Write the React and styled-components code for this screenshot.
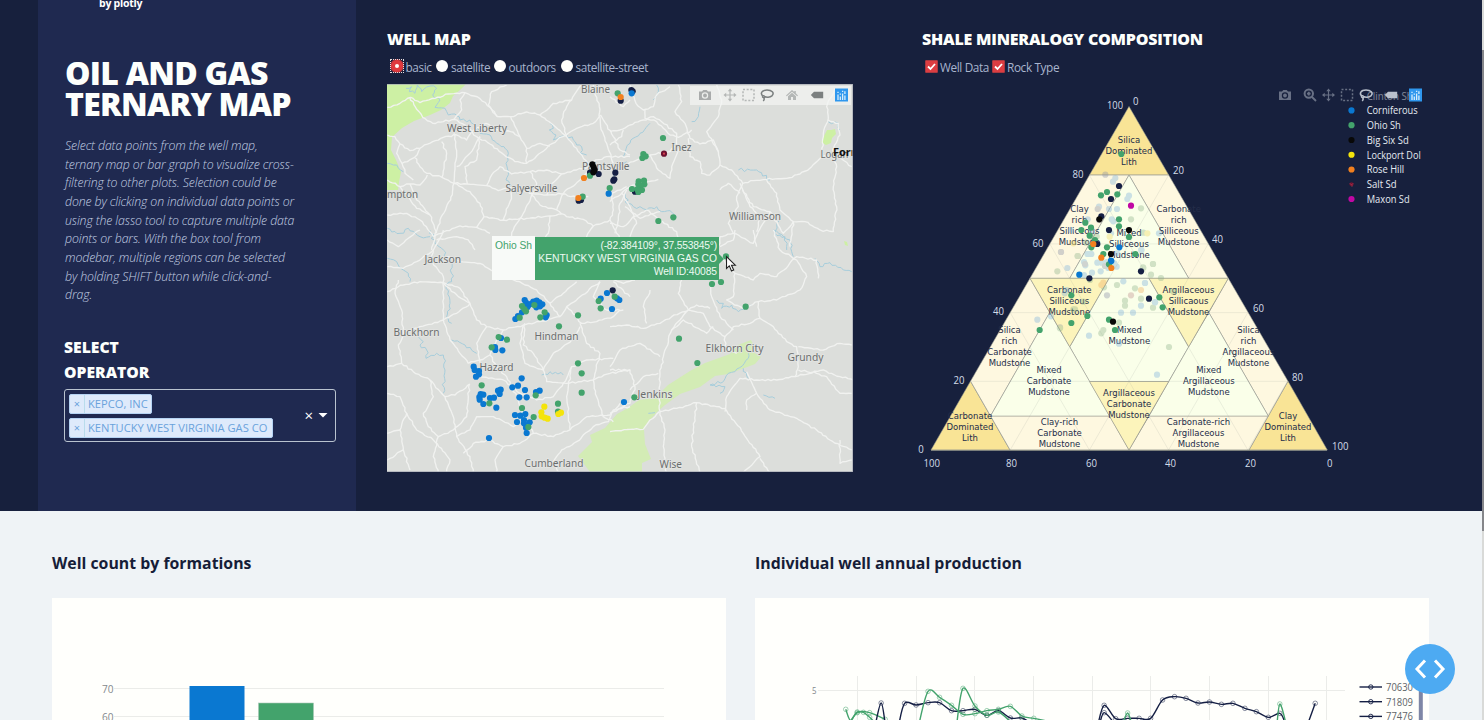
import React from "react";
import styled, { createGlobalStyle } from "styled-components";

const C = {
  bg: "#17203d", side: "#1f2950", light: "#eff3f6", card: "#fffffc",
  blue: "#0a78d1", green: "#43a36c", navy: "#151f44", black: "#080808",
  yellow: "#f4e40c", orange: "#f2801f", red: "#6d1230", magenta: "#c008a4",
};
const sans = '"Open Sans", "Noto Sans", sans-serif';

const Global = createGlobalStyle`
  * { box-sizing: border-box; }
  body { margin: 0; background: ${C.light}; font-family: ${sans}; overflow: hidden; }
  h1, h2, h3, p { margin: 0; }
`;
const Page = styled.div`position: relative; width: 1484px; height: 720px; overflow: hidden;`;
const Banner = styled.section`display: flex; height: 511px; padding-left: 38px; background: ${C.bg};`;
const Sidebar = styled.aside`width: 318px; background: ${C.side}; padding: 0 20px 0 26px; flex: none;`;
const LogoText = styled.div`
  display: flex; align-items: flex-start; height: 57px; padding-left: 35px; font: 700 10.5px/16px ${sans}; color: #fff;
  letter-spacing: -0.25px; & span { margin-top: -5px; }
`;
const Title = styled.h1`font: 800 32px/31px ${sans}; color: #fdfffc; height: 80px; padding-left: 1px; white-space: nowrap; letter-spacing: -0.72px;`;
const Intro = styled.p`font: italic 300 12.3px/18.67px ${sans}; color: #c3d0e4; height: 198px; padding-left: 1px; white-space: nowrap; letter-spacing: -0.11px;`;
const Label = styled.h3`font: 800 15.7px/25px ${sans}; color: #fdfffc; height: 54px;`;
const Select = styled.div`
  width: 272px; height: 53px; border: 1px solid #b9c3cf; border-radius: 3px;
  display: flex; align-items: center; justify-content: space-between; padding: 0 7px 0 4px;
`;
const Tags = styled.div`display: flex; flex-direction: column; align-items: flex-start; gap: 4px;`;
const Tag = styled.div`
  display: flex; height: 20px; width: ${p => p.$w}px; background: #deeafb; border: 1px solid #b5d3f3; border-radius: 2px;
  font: 400 11.15px/18px ${sans}; color: #6aa2dc; white-space: nowrap;
`;
const TagX = styled.span`width: 15px; flex: none; text-align: center; border-right: 1px solid #b9dcec; line-height: 17px; font-size: 11px;`;
const TagName = styled.span`padding-left: 3px;`;
const SelectEnd = styled.div`display: flex; align-items: center; gap: 5px; color: #fff; font: 400 15px/15px ${sans};`;

const Panel = styled.section`width: ${p => p.$w}px; margin-left: ${p => p.$ml}px; padding-top: 29px; flex: none;`;
const Heading = styled.h2`font: 800 16px/20px ${sans}; color: #fdfffc; white-space: nowrap; letter-spacing: -0.22px;`;
const Options = styled.div`display: flex; height: 35px; padding: 8px 0 0 ${p => p.$pl}px; font: 400 11.8px/20px ${sans}; color: #a9b5ce;`;
const Option = styled.label`display: flex; gap: ${p => p.$gap}px; width: ${p => p.$w}px; white-space: nowrap; letter-spacing: -0.38px;`;
const Radio = styled.span`
  position: relative; width: 12px; height: 12px; margin-top: 3px; border-radius: 50%; flex: none; background: #fffffc;
  ${p => p.$on && `
    border: 4px solid #e0393e; box-shadow: 0 0 0 1px #a8343e;
    &::after { content: ""; position: absolute; inset: -5px; border: 1px dotted #e8dede; }
  `}
`;
const Check = styled.span`width: 13px; height: 13px; margin-top: 3px; flex: none; background: #dc3d42; border: 1px solid #a93840; border-radius: 1px; display: flex;`;
const Plot = styled.div`position: relative; height: 388px;`;
const Drawing = styled.svg`display: block; overflow: ${p => p.$clip ? "hidden" : "visible"};`;
const ModeBar = styled.div`
  position: absolute; top: ${p => p.$top}px; left: ${p => p.$left}px; width: ${p => p.$w}px; height: 19px;
  background: ${p => p.$bg}; color: ${p => p.$fg};
`;
const Hover = styled.div`
  position: absolute; left: 105px; top: 152px; display: flex; align-items: flex-start;
  font: 400 10.3px/13.3px "Liberation Sans", Arial, sans-serif; white-space: nowrap;
`;
const HoverName = styled.div`width: 43px; height: 44px; padding-top: 2.500px; background: #f8faf8; color: ${C.green}; text-align: center;`;
const HoverBody = styled.div`
  width: 184px; height: 43px; margin-top: 1px; padding: 1.500px 2px 0 0; background: ${C.green}; color: #eefaf2; text-align: right; position: relative;
  &::after { content: ""; position: absolute; left: 100%; top: 17px; border: 5px solid transparent; border-left-color: ${C.green}; }
`;
const Line = styled.div`letter-spacing: ${p => p.$ls || 0}px;`;
const Pointer = styled.svg`position: absolute; left: 338px; top: 171px;`;

const Lower = styled.section`display: flex; gap: 29px; padding: 41px 0 0 52px; height: 209px;`;
const Column = styled.div`width: 674px;`;
const SubHeading = styled.h2`font: 700 15.85px/22px ${sans}; color: #161d38; height: 46px; white-space: nowrap;`;
const Card = styled.div`background: ${C.card}; height: 122px; overflow: hidden;`;
const DevButton = styled.button`
  position: absolute; left: 1405px; top: 644px; width: 50px; height: 50px; border: 0; padding: 0; border-radius: 50%;
  background: #4daaf2; display: flex; align-items: center; justify-content: center;
`;
const Scroll = styled.div`position: absolute; right: 0; top: 0; display: flex; align-items: flex-start; width: 2px; height: 720px; background: #d9dad8;`;
const Thumb = styled.div`width: 2px; height: ${p => p.$h}px; margin-top: 50px; background: #85868a;`;

/* a label whose drawn width is fixed */
const T = ({ x, y, w, children, size = 11.5, fill = "#6b6e6e", ...r }) => (
  <text x={x} y={y} textLength={w} lengthAdjust="spacingAndGlyphs" fontSize={size} fill={fill} {...r}>{children}</text>
);

const ICONS = {
  camera: <><path fillRule="evenodd" d="M1 3.5h3L5.3 2h3.4L10 3.5h3V12H1zM7 4.3a3.200 3.200 0 1 0 0 6.400a3.200 3.200 0 1 0 0 -6.400z" fill="currentColor" /><circle cx="7" cy="7.5" r="1.9" fill="currentColor" /></>,
  zoom: <><circle cx="5.8" cy="5.6" r="4.2" fill="none" stroke="currentColor" strokeWidth="2" /><path d="M9 9l4 4M4 5.6h3.6M5.8 3.8v3.6" stroke="currentColor" strokeWidth="1.8" /></>,
  pan: <><path d="M7 2v10M2 7h10" stroke="currentColor" strokeWidth="1.2" /><path d="M7 .5L9.2 3.2H4.8zM7 13.5L4.8 10.8h4.4zM.5 7l2.7-2.2v4.4zM13.5 7l-2.7 2.2V4.8z" fill="currentColor" /></>,
  box: <rect x="1.5" y="1.5" width="11" height="11" fill="none" stroke="currentColor" strokeWidth="1.5" strokeDasharray="2 1.67" />,
  lasso: <path d="M3.2 8.3C-.5 5.5 2 2 7 2s7.5 3 5.2 5.6C10 9.8 6 9.7 4.5 8.3 3 6.7 1.7 8.6 3 9.4c1.4.8 2.4-.4 1.5-1.1M3.6 9.6c1 1.2.4 2.6-.4 3.4" fill="none" stroke="currentColor" strokeWidth="1.5" />,
  home: <path d="M7 2l2.3 2V3h1.5v2.3L13 7.5l-.8.8L7 3.7 1.8 8.3 1 7.5zM7 4.8l4 3.5V12H8V9H6v3H3V8.3z" fill="currentColor" />,
  tag: <path d="M.8 7L4 3.8h9.2v6.4H4z" fill="currentColor" />,
  logo: <><rect x=".5" y=".5" width="13" height="13" fill="#2f97ee" /><path d="M3.5 12V6.5M5.8 12V8.5M8.1 12V5.5M10.4 12V7.5M3.5 5V3.7M5.8 6.8V5.5M8.1 4V2.7M10.4 6V3.2" stroke="#d9eefb" strokeWidth="1.3" /></>,
};
const IconStrip = ({ items }) => (
  <svg width="170" height="19" overflow="visible">
    {items.map(([n, x, o = 1]) => <g key={n} transform={`translate(${x - 7},2)`} opacity={o}>{ICONS[n]}</g>)}
  </svg>
);

const ROADS = [
  [380, 20, [
    "M22,262L60,250 92,232 120,248 165,235 205,222 255,218 300,236 330,262 352,290 392,290 440,276 480,285 520,250 575,240 605,195",
    "M90,232L110,268 128,292 158,310 190,305 222,298 255,315 290,350 330,372 372,404 405,425 440,430 470,408 508,375 548,350 590,325 640,310 662,285",
    "M22,345L45,350 60,372 90,392 120,385 158,365 190,352 230,345 260,360 282,330 318,310",
    "M60,372L50,400 66,430 104,412 120,385M104,412L120,440 140,460 186,472 222,490 262,492 320,497 355,512 400,500 450,520 500,525 545,522 600,535 625,530",
    "M222,340L230,400 225,440 222,490 212,540 180,600 165,650 155,690M22,480L60,500 90,492 120,495 142,465",
    "M66,430L75,460 100,480M60,500L85,530 110,565 150,585 170,640M222,490L270,515 300,550 312,590 370,600 440,595 510,588 545,582",
    "M160,650L200,632 240,618 290,622 330,640M170,660L230,650 265,660 285,690M320,497L335,465 360,440 395,462 450,455 500,450 545,462 590,450 632,440",
    "M380,690L400,630 430,580 455,525 480,555 530,570 560,590 610,598 640,618 690,600 700,570 695,520 740,500",
    "M352,290L325,255 335,215 380,195M392,290L420,350 440,385 440,430M480,285L520,315 560,350 600,400 625,430M640,195L658,260 662,320 680,370 700,430",
    "M300,350L270,400 245,430 230,440M440,385L480,370 510,378M662,285L700,350 720,390 750,405M625,430L680,410 750,410M22,585L80,580 120,600 160,650",
    "M545,462L510,500 500,525M530,570L550,520 600,480 632,440M690,600L710,640 740,690M510,588L505,640 480,690M90,492L110,540 150,585",
    "M222,298L245,270 240,240 255,218M318,310L355,330 392,335 420,350M560,350L545,300 560,260 575,240M640,618L620,650 625,690",
    "M450,455L470,490 455,525M262,492L255,440 290,420 300,350M312,590L290,622M185,365L200,400 186,472M400,500L390,545 370,600",
  ]],
  [610, 20, [
    "M0,335L30,330 60,315 100,300 130,290 155,305 200,340 200,375 180,395 120,405 70,425 0,450",
    "M60,195L78,250 100,270 130,260 140,225 180,200M105,270L105,295 140,305 180,345 205,352 245,330M205,195L215,245 195,275 225,310 240,355 270,372 310,360 325,395 330,435 365,450 398,490 430,482 470,478 530,475 570,462 605,440 635,410",
    "M320,195L335,240 325,290 290,335 325,395M235,355L240,410 270,425 275,460 300,465 330,435M398,490L380,530 385,560 355,610 370,640 430,670 445,635 480,575 430,560 398,510",
    "M635,410L680,405 725,440M635,410L640,340 655,295 650,260 675,205M655,300L685,310 690,345 668,390 680,440 670,500 680,560 670,635 630,630 585,605 550,605 510,570 500,520 470,480",
    "M390,490L420,560 450,590 440,635M550,605L540,680M370,640L330,650 325,690M480,575L520,640 550,605",
    "M120,405L145,450 180,475 185,440 210,380M145,478L115,485 60,500 0,545M50,510L30,550 25,600 15,640M45,560L90,595 150,575M110,570L150,600 200,635 205,690",
    "M0,230L40,260 60,240M0,375L35,350 40,330M390,520L355,490 330,510M0,610L40,620 70,590 110,570M35,520L60,560 80,610 60,650",
  ]],
  [380, 230, [
    "M22,110L70,115 110,95 160,60 190,0M22,30L55,50 85,25 120,0M22,185L70,165 120,155 190,158 240,175 270,220 290,270 320,290 370,300 430,285 480,275 540,260 560,230 600,200 660,155",
    "M55,150L45,190 65,240 70,310 55,345 65,400 100,425 150,450 195,500 225,495 270,462M160,60L150,90 190,140 190,270 210,330 240,370 265,400",
    "M190,160L235,200 270,220M370,300L350,330 330,375 350,410 380,440 410,500 430,560M320,290L290,340 300,400M540,260L510,220 470,180 400,150 350,130 300,100 240,95 200,80",
    "M560,230L605,280 650,275 700,260 720,240M600,290L575,330 520,370 490,420 500,455 560,460 640,450 690,430 750,420M22,490L60,500 80,550 60,600 70,660 90,720",
    "M150,450L160,500 130,550 145,590 175,620 160,680 175,728M80,550L110,600 160,630M195,500L220,560 230,620 270,680 280,728M175,620L220,600 260,560 265,500 268,462",
    "M300,440L370,450 420,490 470,510 520,500 550,460 575,410 620,390 700,385M430,560L460,610 420,640 370,650 345,690 350,728M460,610L520,620 570,600 620,560 690,555 720,520",
    "M160,630L210,690 200,728M370,650L330,630 280,640 250,670M540,728L515,700 545,660 590,635 640,590 685,575 700,540 750,530M640,450L650,500 670,560 700,575",
    "M660,155L640,200 680,240 730,240M700,155L750,200M600,280L620,340 660,370 640,450M435,280L430,345 460,370 490,420",
    "M22,410L65,400M22,690L70,660M22,610L60,600M230,620L270,600 290,560 340,560 400,590 430,560M575,410L560,500 570,600",
    "M265,400L300,390 330,375M70,310L120,290 190,270M270,220L230,250 190,270M430,285L420,340 435,400 490,420M510,220L550,190 590,155",
  ]],
  [610, 230, [
    "M0,145L40,160 75,150M215,150L205,190 235,240 210,270 185,300 160,380 150,430 148,510 150,545 165,600 160,650 170,728M0,290L50,285 100,295 150,280 185,260 235,240",
    "M235,240L280,250 300,290 345,320 370,290 420,280 450,265 445,215 500,210 570,180 590,140 560,90 510,60 490,0",
    "M345,320L345,350 380,370M370,300L330,260 305,200 300,165M330,80L375,130 370,200 350,210 400,235 445,215M450,265L490,290 530,335 560,350 565,410 555,440 500,450 440,450 390,445 350,500 345,545",
    "M565,420L620,430 650,440 690,490 725,490M555,440L640,420 690,440 730,450M410,425L440,490 480,540 560,565 620,600 660,630 725,660",
    "M150,545L200,535 260,518 345,535 400,610 450,680 400,728M260,518L250,600 245,650 270,728M690,630L690,700 725,690M450,685L480,728",
    "M0,420L60,420 75,470 60,520 0,550M185,300L220,270 290,310 310,290M145,430L100,440 60,480M235,240L260,225 300,235M120,180L100,230 110,280M440,490L410,510 410,540",
    "M375,0L370,30 330,50M440,50L430,0M375,130L430,150 450,130 500,140 560,80 620,90 625,145M565,350L640,360 690,340 725,345M150,380L90,340 30,360 0,410",
    "M0,605L60,598 100,598M100,598L120,570 148,545",
  ]],
];
const WATER = [
  [380, 20, ["M78,205L95,200 88,215 105,220 112,195 125,215 150,198 170,205 158,225 180,240 165,262 195,265 205,285 225,282 240,300 270,300 300,340 330,345 350,370 372,380 385,400 378,430 385,455 378,480 400,500 410,520",
    "M510,310L520,325 508,330 528,345 520,360 540,350 560,345 580,360 590,375 605,380 600,400 620,405", "M740,425L715,440 700,470M22,625L60,640 85,625 120,650 150,650M22,430L50,435 70,455"]],
  [610, 20, ["M140,195L145,215 130,240M270,260L265,290 245,305M120,310L90,340 60,370 40,410M385,450L440,450 480,480M45,520L55,540 45,545 70,560 90,560 110,570 140,560 155,575 180,572 200,590M510,600L495,640 525,650 530,690M655,305L685,310 690,330"]],
  [380, 230, ["M22,85L50,95 70,120 85,130 90,155M150,0L165,40 190,60 200,85 215,95 215,155 200,165 210,220 200,260 215,280M115,320L130,335 120,345 140,360 138,385 170,370 190,375 195,420 190,490M215,330L255,345 290,370M485,435L510,425 550,435"]],
  [610, 230, ["M320,210L340,220 335,235 365,225 385,245 410,235 425,225M490,0L540,30 550,80M615,85L630,110 660,98 700,120 725,125M330,490L345,470 300,465 340,455 355,430 375,425 415,385 415,370M460,495L495,505M115,550L135,548M400,415L415,445"]],
];
/* splits each straight stretch into short steps with small sideways offsets, so that roads and rivers meander */
const meander = (d, amp) => d.split("M").filter(Boolean).map(sub => {
  const pts = sub.split(/[L ]+/).filter(Boolean).map(s => s.split(",").map(Number));
  let out = `M${pts[0]}`;
  for (let i = 1; i < pts.length; i++) {
    const [x0, y0] = pts[i - 1], [x1, y1] = pts[i];
    const len = Math.hypot(x1 - x0, y1 - y0) || 1, n = Math.max(1, Math.round(len / 9));
    for (let k = 1; k < n; k++) {
      const t = k / n, x = x0 + (x1 - x0) * t, y = y0 + (y1 - y0) * t;
      const o = amp * (Math.sin(x * 0.37 + y * 0.23) + Math.sin(x * 1.13 - y * 0.91)) / 1.4;
      out += `L${(x - (y1 - y0) / len * o).toFixed(1)},${(y + (x1 - x0) / len * o).toFixed(1)}`;
    }
    out += `L${x1},${y1}`;
  }
  return out;
}).join("");

/* wells: origin x, origin y, colour, positions at a third of a pixel */
const WELLS = [
  [380, 20, "navy", [[722,242],[603,540],[596,542],[656,462],[630,458],[706,458],[703,478],[700,482]]],
  [380, 20, "green", [[713,220],[630,467],[608,530],[689,504]]],
  [380, 20, "orange", [[722,231],[612,474],[595,534]]],
  [380, 20, "black", [[637,433],[641,442],[644,450],[640,457]]],
  [380, 20, "blue", [[686,521]]],
  [610, 20, "navy", [[64,210],[68,214],[75,515]]],
  [610, 20, "blue", [[65,220]]],
  [610, 20, "green", [[159,354],[100,402],[97,414],[107,409],[66,507],[86,484],[102,482],[85,493],[103,493],[92,497],[96,510],[85,516],[82,508],[145,603],[190,592]]],
  [610, 20, "red", [[162,401]]],
  [380, 230, "blue", [[434,210],[438,218],[447,224],[455,221],[460,215],[470,212],[478,217],[487,223],[480,229],[469,232],[442,232],[435,228],[426,247],[414,258],[406,267],[500,255],[497,262],[363,324],[345,351],[346,360],[367,361],[681,189],[662,206],[711,205],[718,210],[696,237],[281,410],[284,420],[297,423],[297,433],[288,440],[425,445],[414,467],[397,472],[435,480],[418,502],[440,502],[468,486],[479,482],[302,492],[310,494],[298,501],[299,509],[310,522],[330,504],[342,503],[354,482],[362,479],[359,492],[349,533],[405,555],[421,557],[436,552],[411,576],[432,570],[449,577],[432,580],[438,593],[440,609],[327,624],[732,516]]],
  [380, 230, "green", [[426,228],[433,237],[438,244],[419,263],[463,225],[494,247],[481,262],[356,321],[381,329],[335,352],[656,213],[704,200],[662,235],[594,256],[537,289],[594,400],[605,430],[605,488],[305,466],[328,520],[467,496],[426,534],[461,561],[445,591],[534,521],[534,545]]],
  [380, 230, "navy", [[698,181]]],
  [380, 230, "yellow", [[493,530],[484,547],[485,559],[494,563],[503,566],[543,548],[535,552]]],
  [610, 230, "green", [[348,79],[306,162],[333,156],[407,230],[207,326],[262,399],[73,502]]],
];
const Dots = ({ data, r = 3.1 }) => data.map(([ox, oy, c, pts], i) => (
  <g key={i} fill={C[c] || c}>{pts.map(([x, y], j) => <circle key={j} cx={ox + x / 3} cy={oy + y / 3} r={r} />)}</g>
));
const Paths = ({ data, amp, ...r }) => data.map(([x, y, list], i) => (
  <g key={i} transform={`translate(${x},${y}) scale(.3333)`} fill="none" strokeLinejoin="round" {...r}>
    {list.map((d, j) => <path key={j} d={meander(d, amp)} />)}
  </g>
));
const PLACES = [
  ["Blaine",581,93,29],["West Liberty",447,131.5,60],["Salyersville",505.5,191.5,52],["Paintsville",582,169.5,47.5],["Inez",671.5,151,20],
  ["Logan",820.5,157.5,28],["Williamson",729,219.5,52],["Jackson",424.5,262.5,36.5],["Buckhorn",393.5,335.5,46],["Hindman",534.5,340,44],
  ["Hazard",479.5,371,34],["Cumberland",524.5,467,59],["Elkhorn City",705.5,351.5,58],["Grundy",787.5,361,36],["Jenkins",637.5,398,35],["Wise",659.5,468,22.5],
];

const WellMap = () => (
  <Plot>
    <Drawing $clip width="466" height="388" viewBox="387 84 466 388" fontFamily='"Noto Sans", sans-serif'>
      <rect x="387" y="84" width="466" height="388" fill="#dcdedb" />
      <path d="M387,84H466L460,90 453,96 450,103 441,110 430,115 414,121 402,128 392,137 391,150 396,160 401,172 399,182 398,190H387z" fill="#cdf0a4" />
      <path d="M831,130L835,129 836,134 832,138 831,143 826,145 821,142 824,136 827,130zM844,241l3,1 1,4 -3,-1z" fill="#cdf0a4" />
      <path d="M578,456L592,442 590,435 605,428 617,414 628,408 639,400 655,398 668,385 690,371 705,363 730,354 738,345 751,340 754,346 753,352 761,357 755,364 742,369 728,374 715,376 700,387 680,394 665,405 657,412 646,425 644,430 645,444 651,459 642,463 642,472H590z" fill="#d3ecb5" />
      <Paths data={WATER} amp={4} stroke="#a6cddc" strokeWidth="3" />
      <Paths data={ROADS} amp={2} stroke="#f1f2f0" strokeWidth="4" />
      {PLACES.map(([t, x, y, w]) => <T key={t} x={x} y={y} w={w} size={11.2} stroke="#e4e5e3" strokeWidth="1.5" paintOrder="stroke">{t}</T>)}
      <T x="387" y="198" w="31" size={11.2}>mpton</T>
      <T x="833" y="155.5" w="35" size={10.8} fill="#111" fontWeight="700">Forma</T>
      <Dots data={WELLS} />
      <circle cx="664" cy="153.7" r="1.1" fill="#d8404f" />
      <path d="M387,84.5H853M387,471.5H853M852.5,84V472" stroke="#a7abb5" fill="none" opacity=".7" />
    </Drawing>
    <ModeBar $top={2} $left={303} $w={161} $bg="rgba(244,245,243,.7)" $fg="#7c8080">
      <IconStrip items={[["camera",15,.6],["pan",40,.5],["box",58.5,.5],["lasso",77],["home",102,.5],["tag",127],["logo",151.5]]} />
    </ModeBar>
    <Hover>
      <HoverName>Ohio Sh</HoverName>
      <HoverBody>
        <Line $ls={-0.2}>(-82.384109°, 37.553845°)</Line>
        <Line>KENTUCKY WEST VIRGINIA GAS CO</Line>
        <Line $ls={-0.1}>Well ID:40085</Line>
      </HoverBody>
    </Hover>
    <Pointer width="12" height="18" viewBox="0 0 12 18"><path d="M1.5 1.5v12l2.8-2.6 2.2 5 2.2-1-2.2-4.7h3.8z" fill="#fff" stroke="#222" strokeWidth="1.1" /></Pointer>
  </Plot>
);

const REGIONS = [
  ["#f9e496", "1129,106.5 1168.7,175 1089.5,175"], ["#f9e496", "931,450 970.5,381.2 1010,450"], ["#f9e496", "1327.3,450 1288,381.2 1249,450"],
  ["#fef8e0", "1030,278.3 1089.5,175 1129,175 1069.7,278.3"], ["#fef8e0", "1129,175 1168.7,175 1228.3,278.3 1188.7,278.3"],
  ["#fef8e0", "970.5,381.2 1030,278.3 1049.7,312.5 990.5,416"], ["#fef8e0", "1208.8,312.5 1228.3,278.3 1288,381.2 1268.3,416"],
  ["#fef8e0", "1010,450 990.5,416 1109.5,416 1129,450"], ["#fef8e0", "1129,450 1149,416 1268.3,416 1249,450"],
  ["#faffe9", "1069.7,278.3 1129,175 1188.7,278.3"], ["#faffe9", "1109,278.3 1149,278.3 1188.7,346.8 1168.7,381.5 1089.5,381.5 1069.7,346.8"],
  ["#faffe9", "990.5,416 1049.7,312.5 1069.7,346.8 1109.5,416"], ["#faffe9", "1188.7,346.8 1208.8,312.5 1268.3,416 1149,416"],
  ["#fcf4bb", "1030,278.3 1109,278.3 1069.7,346.8"], ["#fcf4bb", "1149,278.3 1228.3,278.3 1188.7,346.8"], ["#fcf4bb", "1089.5,381.5 1168.7,381.5 1129,450"],
];
const ROCKS = [
  [1129,143,"Silica","Dominated","Lith"],[1079.5,212,"Clay","rich","Silliceous","Mudstone"],[1129,235.5,"Mixed","Silliceous","Mudstone"],
  [1178.7,212,"Carbonate","rich","Silliceous","Mudstone"],[1069.3,292.7,"Carbonate","Silliceous","Mudstone"],[1188.5,292.7,"Argillaceous","Sillicaous","Mudstone"],
  [1129.3,332.5,"Mixed","Mudstone"],[1009.5,333,"Silica","rich","Carbonate","Mudstone"],[1248.5,333,"Silica","rich","Argillaceous","Mudstone"],
  [1049,373,"Mixed","Carbonate","Mudstone"],[1208.8,373,"Mixed","Argillaceous","Mudstone"],[1129,396,"Argillaceous","Carbonate","Mudstone"],
  [1059.5,425,"Clay-rich","Carbonate","Mudstone"],[1198.5,425,"Carbonate-rich","Argillaceous","Mudstone"],[970,419,"Carbonate","Dominated","Lith"],[1288,419,"Clay","Dominated","Lith"],
];
const FAINT = [
  [910, 20, "#7fb2dc", [[616,474],[609,485],[657,527],[652,537],[567,560],[597,567],[621,567],[533,598],[605,598],[610,604],[483,630],[546,632],[603,640],[747,640],[694,690],[533,702],[544,702],[621,700]]],
  [910, 20, "#8a90a8", [[586,464],[563,567],[453,696],[567,600]]],
  [910, 20, "#8fb48c", [[693,565],[663,598],[503,708],[700,638],[560,650],[545,650],[528,668]]],
  [910, 20, "#f0d860", [[712,640],[599,650],[490,670]]],
  [910, 240, "#7fb2dc", [[533,42],[543,42],[522,66],[526,76],[546,98],[562,68],[575,68],[590,66],[613,70],[620,80],[572,94],[522,105],[470,150],[640,124],[705,129],[735,187],[693,197],[633,218],[669,218],[423,229],[537,287],[627,311],[741,404],[382,239],[472,84],[595,84],[464,160]]],
  [910, 240, "#8a90a8", [[453,36],[591,166],[450,262],[525,72],[585,78]]],
  [910, 240, "#8fb48c", [[503,48],[442,94],[729,72],[700,84],[508,105],[540,120],[621,135],[675,145],[582,142],[645,182],[645,197],[693,176],[729,203],[627,248],[580,270],[574,280],[520,185],[490,208],[450,265],[495,208]]],
  [910, 240, "#f0b060", [[574,135],[580,128],[693,150]]],
  [910, 240, "#c09090", [[663,166]]],
  [1120, 240, "#8fb48c", [[99,72],[93,104],[123,114],[147,321],[69,82],[160,155]]],
  [1120, 240, "#7fb2dc", [[64,30],[75,129],[105,187]]],
];
const CORES = [
  [910, 20, "green", [[634,402],[591,516],[573,526],[622,523],[526,608],[543,623],[514,630],[539,647],[555,660],[627,598],[627,619],[657,651],[544,682],[591,682],[580,702],[676,702]]],
  [910, 20, "navy", [[627,498],[603,537],[574,589],[597,630],[562,672]]],
  [910, 20, "black", [[568,598],[657,630],[603,702]]],
  [910, 20, "magenta", [[663,557]]],
  [910, 20, "blue", [[628,682],[603,722]]],
  [910, 20, "orange", [[550,672],[574,713]]],
  [910, 240, "green", [[597,73],[484,166],[532,228],[484,249],[389,270],[597,239],[615,270]]],
  [910, 240, "navy", [[538,115],[693,94],[717,176]]],
  [910, 240, "blue", [[508,104],[604,63]]],
  [910, 240, "orange", [[604,84]]],
  [910, 240, "black", [[609,245]]],
  [1120, 240, "green", [[118,172],[128,202]]],
];
const TICKS = [
  ["100",1107,108.5,16],["0",1133,105,5.5],["80",1072.5,177.5,11],["60",1032.5,247,11],["40",993,315,11],["20",953.5,384,11],["0",918.3,453,5.5],
  ["20",1173,173.5,11],["40",1212,243,11],["60",1253,311.5,11],["80",1292,381,11],["100",1332,450,16.5],
  ["100",923.5,467,16.5],["80",1006,467,11],["60",1086,467,11],["40",1165,467,11],["20",1245,467,11],["0",1327,467,5.5],
];
const LEGEND = [["Clinton Sh",46,"none"],["Corniferous",51,"blue"],["Ohio Sh",34,"green"],["Big Six Sd",42,"black"],["Lockport Dol",54,"yellow"],["Rose Hill",37.5,"orange"],["Salt Sd",30,"red"],["Maxon Sd",43,"magenta"]];

const grid = [];
for (let k = 1; k < 5; k++) {
  const f = k / 5, y = 450 - 343.5 * f;
  grid.push(`M${931 + 198 * f},${y}H${1327 - 198 * f}M${931 + 198 * f},${y}L${931 + 396 * f},450M${1327 - 198 * f},${y}L${1327 - 396 * f},450`);
}

const Ternary = () => (
  <Plot>
    <Drawing width="560" height="388" viewBox="922 84 560 388" fontFamily={sans}>
      {REGIONS.map(([f, p], i) => <polygon key={i} points={p} fill={f} stroke="#9b9c92" strokeWidth=".55" />)}
      <path d={grid.join("")} stroke="#9aa09a" strokeWidth=".8" opacity=".22" fill="none" />
      <path d="M931,450.3H1327" stroke="#8d8f86" strokeWidth="1" />
      <g fontFamily='"DejaVu Sans", sans-serif' textAnchor="middle" fontSize="8.5" fill="#242d49">
        {ROCKS.map(([x, y, ...ls], i) => ls.map((l, j) => <text key={i + "-" + j} x={x} y={y + j * 11.1}>{l}</text>))}
      </g>
      <g opacity=".38"><Dots data={FAINT} /></g>
      <Dots data={CORES} />
      {TICKS.map(([t, x, y, w], i) => <T key={i} x={x} y={y} w={w} size={10.3} fill="#d3dce8">{t}</T>)}
      {LEGEND.map(([t, w, c], i) => (
        <g key={t} opacity={i ? 1 : .5}>
          <circle cx="1351.5" cy={95.7 + i * 14.76} r={c === "red" ? 2 : 3.1} fill={C[c] || "none"} />
          {c === "red" && <path d="M1350,183.5l1,1M1352,184.5l1,-1M1351.5,186l1,0" stroke="#e05068" strokeWidth=".8" />}
          <T x="1366.7" y={99.5 + i * 14.76} w={w} size={10.8} fill="#e6ebf2">{t}</T>
        </g>
      ))}
    </Drawing>
    <ModeBar $top={2} $left={348} $w={155} $bg="transparent" $fg="#b9c0cc">
      <IconStrip items={[["camera",15,.5],["zoom",40,.5],["pan",58.5,.5],["box",77,.5],["lasso",96],["tag",121],["logo",145.5]]} />
    </ModeBar>
  </Plot>
);

const SERIES = [
  [C.green, [[126,238],[137,272],[152,246],[180,248],[215,268]]],
  [C.green, [[137,272],[152,248],[166,247],[180,262],[190,275]]],
  [C.navy, [[192,290],[206,219],[216,290]]],
  [C.navy, [[245,290],[259,220],[285,225],[312,218],[338,218],[365,242],[391,242],[418,238],[445,256],[471,242],[498,264],[524,264],[545,280]]],
  [C.green, [[290,290],[312,184],[338,202],[365,226],[391,253],[418,251],[445,242],[471,238],[498,229],[524,258],[551,265],[577,272]]],
  [C.green, [[376,290],[391,175],[418,228],[445,256],[471,246],[498,275]]],
  [C.navy, [[695,290],[710,226],[736,266],[763,265],[789,265],[815,265],[842,210],[869,200],[895,205],[922,219],[948,216],[975,223],[1001,220],[1028,235],[1054,245],[1081,262],[1107,250],[1118,275]]],
  [C.navy, [[700,280],[710,248],[730,275]]],
  [C.green, [[752,280],[763,249],[772,280]]],
  [C.green, [[1100,290],[1107,222],[1120,275]]],
  [C.navy, [[1172,275],[1187,220]]],
];
const px = ([x, y]) => [790 + x / 2.26, 630 + y / 3];
const curve = pts => {
  const p = pts.map(px);
  return p.map((q, i) => {
    if (!i) return `M${q}`;
    const a = p[i - 1], z = p[i - 2] || a, n = p[i + 1] || q;
    return `C${a[0] + (q[0] - z[0]) / 6},${a[1] + (q[1] - z[1]) / 6} ${q[0] - (n[0] - a[0]) / 6},${q[1] - (n[1] - a[1]) / 6} ${q}`;
  }).join("");
};

const STYLES = [["basic",45,2.5,1],["satellite",57.5,3],["outdoors",67.5,3],["satellite-street",100,2.5]];

export default function App() {
  return (
    <Page>
      <Global />
      <Banner>
        <Sidebar>
          <LogoText><span>by plotly</span></LogoText>
          <Title>OIL AND GAS<br />TERNARY MAP</Title>
          <Intro>
            Select data points from the well map,<br />ternary map or bar graph to visualize cross-<br />
            filtering to other plots. Selection could be<br />done by clicking on individual data points or<br />
            using the lasso tool to capture multiple data<br />points or bars. With the box tool from<br />
            modebar, multiple regions can be selected<br />by holding SHIFT button while click-and-<br />drag.
          </Intro>
          <Label>SELECT<br />OPERATOR</Label>
          <Select>
            <Tags>
              <Tag $w={83}><TagX>×</TagX><TagName>KEPCO, INC</TagName></Tag>
              <Tag $w={204}><TagX>×</TagX><TagName>KENTUCKY WEST VIRGINIA GAS CO</TagName></Tag>
            </Tags>
            <SelectEnd>×<svg width="10" height="5"><path d="M.5 0h9L5 4.5z" fill="#fff" /></svg></SelectEnd>
          </Select>
        </Sidebar>
        <Panel $w={466} $ml={31}>
          <Heading>WELL MAP</Heading>
          <Options $pl={4}>
            {STYLES.map(([t, w, g, on]) => <Option key={t} $w={w} $gap={g}><Radio $on={on} />{t}</Option>)}
          </Options>
          <WellMap />
        </Panel>
        <Panel $w={560} $ml={69}>
          <Heading>SHALE MINERALOGY COMPOSITION</Heading>
          <Options $pl={3}>
            {["Well Data", "Rock Type"].map(t => (
              <Option key={t} $w={67} $gap={2}>
                <Check><svg width="11" height="11"><path d="M2 5.5l2.5 2.5L9 3" fill="none" stroke="#fff" strokeWidth="1.8" /></svg></Check>{t}
              </Option>
            ))}
          </Options>
          <Ternary />
        </Panel>
      </Banner>
      <Lower>
        <Column>
          <SubHeading>Well count by formations</SubHeading>
          <Card>
            <Drawing width="674" height="122" viewBox="52 598 674 122" fontFamily={sans}>
              <path d="M114,688.5H664M114,716.5H664" stroke="#ebece9" />
              <rect x="189.5" y="686" width="55" height="40" fill={C.blue} />
              <rect x="258.5" y="703" width="55" height="20" fill={C.green} stroke="#a9c7b5" strokeWidth=".6" />
              <T x="102" y="692.5" w="11.5" size={10} fill="#84888c">70</T>
              <T x="102" y="720.5" w="11.5" size={10} fill="#84888c">60</T>
            </Drawing>
          </Card>
        </Column>
        <Column>
          <SubHeading>Individual well annual production</SubHeading>
          <Card>
            <Drawing width="674" height="122" viewBox="755 598 674 122" fontFamily={sans}>
              <path d="M818,690.5H1345M857.5,676V720M916.5,676V720M974.5,676V720M1033.5,676V720M1092.5,676V720M1150.5,676V720M1209.5,676V720M1268.5,676V720M1326.5,676V720" stroke="#ebece9" fill="none" />
              <T x="812" y="693.5" w="4.5" size={8.5} fill="#84888c">5</T>
              {SERIES.map(([c, pts], i) => (
                <g key={i} stroke={c} fill="none">
                  <path d={curve(pts)} strokeWidth="1.4" />
                  {pts.filter(p => p[1] < 270).map((p, j) => <circle key={j} cx={px(p)[0]} cy={px(p)[1]} r="2.3" strokeWidth=".9" opacity=".55" />)}
                </g>
              ))}
              {["70630", "71809", "77476"].map((t, i) => (
                <g key={t}>
                  <path d={`M1359.5,${687 + i * 14.7}h22.5`} stroke={C.navy} strokeWidth="1.4" />
                  <circle cx="1370.8" cy={687 + i * 14.7} r="2.2" fill="none" stroke={C.navy} strokeWidth=".9" />
                  <T x="1386" y={691 + i * 14.7} w="27" size={10} fill="#5e6468">{t}</T>
                </g>
              ))}
              <rect x="1418.8" y="680" width="4" height="50" fill="#7e86a6" />
            </Drawing>
          </Card>
        </Column>
      </Lower>
      <DevButton>
        <svg width="34" height="20" fill="none" stroke="#fff" strokeWidth="3"><path d="M12 1.5L4 10l8 8.5M22 1.5L30 10l-8 8.5" /></svg>
      </DevButton>
      <Scroll><Thumb $h={481} /></Scroll>
    </Page>
  );
}
